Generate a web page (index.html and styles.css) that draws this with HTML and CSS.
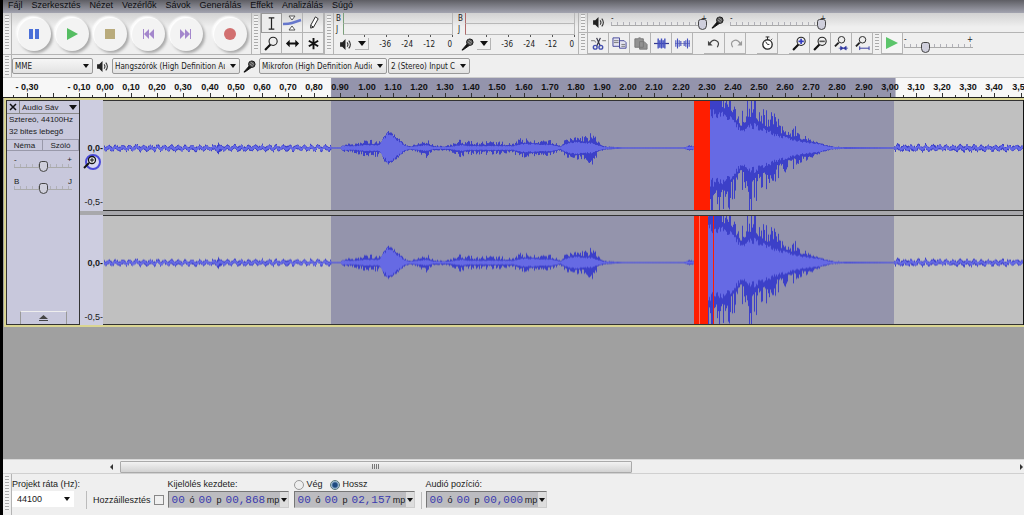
FILE: index.html
```html
<!DOCTYPE html>
<html lang="hu">
<head>
  <meta charset="UTF-8" />
  <meta name="viewport" content="width=device-width, initial-scale=1.0"/>
  <title>Audacity</title>
  <link rel="stylesheet" href="styles.css">
</head>
<body>
  <svg class="defs" aria-hidden="true">
    <symbol id="speaker" viewBox="0 0 12 12">
      <path d="M1 4h2l3-3v10L3 8H1z" fill="#222"/>
      <path d="M7.5 4q1.5 2 0 4M9 2.500q3 3.500 0 7" fill="none" stroke="#333"/>
    </symbol>
    <symbol id="mic" viewBox="0 0 14 14">
      <path d="M1 13L7 6l2 2-7 5z" fill="#111" stroke="#111"/>
      <circle cx="9.500" cy="4.500" r="3.500" fill="#555" stroke="#111"/>
      <path d="M7 4l4 3M8 2l4 3" stroke="#bbb" stroke-width=".7"/>
    </symbol>
    <symbol id="lens" viewBox="0 0 14 14">
      <path d="M1 13l5-5" stroke="#111" stroke-width="2"/>
      <circle cx="8.500" cy="5" r="3.800" fill="#eee" stroke="#222"/>
    </symbol>
  </svg>

  <nav class="menu">
    <a href="#">Fájl</a>
    <a href="#">Szerkesztés</a>
    <a href="#">Nézet</a>
    <a href="#">Vezérlők</a>
    <a href="#">Sávok</a>
    <a href="#">Generálás</a>
    <a href="#">Effekt</a>
    <a href="#">Analizálás</a>
    <a href="#">Súgó</a>
  </nav>

  <div class="toolbars">
    <div class="grip"></div>
    <div class="transport">
      <button aria-label="Szünet"><svg viewBox="0 0 12 12"><path d="M1 1h4v10H1zM7 1h4v10H7z" fill="#4a6fd8"/></svg></button>
      <button aria-label="Lejátszás"><svg viewBox="0 0 12 12"><path d="M1 0l11 6-11 6z" fill="#55bd62"/></svg></button>
      <button aria-label="Leállítás"><svg viewBox="0 0 12 12"><path d="M1 1h10v10H1z" fill="#b9ab7c"/></svg></button>
      <button aria-label="Elejére"><svg viewBox="0 0 12 12"><path d="M1 1h1v10H1zM7 1v10L2 6zM12 1v10L7 6z" fill="#a487cc"/></svg></button>
      <button aria-label="Végére"><svg viewBox="0 0 12 12"><path d="M10 1h1v10h-1zM5 1v10l5-5zM0 1v10l5-5z" fill="#a487cc"/></svg></button>
      <button class="record" aria-label="Felvétel"><svg viewBox="0 0 12 12"><circle cx="6" cy="6" r="6" fill="#d27070"/></svg></button>
    </div>
    <div class="grip"></div>
    <div class="tools">
      <button class="on" aria-label="Kijelölés"><svg viewBox="0 0 16 16"><path d="M5 2h6M8 2v12M5 14h6" stroke="#222" fill="none" stroke-width="1.300"/></svg></button>
      <button class="envelope" aria-label="Burkoló"><svg viewBox="0 0 20 18"><path d="M1 10q6 0 9-1t9-3" stroke="#6677cc" stroke-width="2.500" fill="none"/><path d="M7 2h6l-3 4zM7 16h6l-3-4z" fill="#fff" stroke="#555"/></svg></button>
      <button aria-label="Rajzolás"><svg viewBox="0 0 16 16"><path d="M5 14V11l5-9 3 2-5 9zM5 11l3 2" stroke="#222" fill="#fff"/></svg></button>
      <button aria-label="Nagyítás"><svg viewBox="0 0 14 14"><use href="#lens"/></svg></button>
      <button aria-label="Időeltolás"><svg viewBox="0 0 16 16"><path d="M1 8l4-4v3h6V4l4 4-4 4V9H5v3z" fill="#111"/></svg></button>
      <button aria-label="Többfunkciós"><svg viewBox="0 0 16 16"><path d="M8 2v12M3 5l10 6M13 5L3 11" stroke="#111" stroke-width="2"/></svg></button>
    </div>
    <div class="grip"></div>
    <div class="meter">
      <div class="channels"><span>B</span><i></i><span>J</span><i></i></div>
      <div class="scale">
        <svg class="icon" viewBox="0 0 12 12"><use href="#speaker"/></svg>
        <button aria-label="Kimeneti szint"></button>
        <span>-36</span><span>-24</span><span>-12</span><span>0</span>
      </div>
    </div>
    <div class="meter input">
      <div class="channels"><span>B</span><i></i><span>J</span><i></i></div>
      <div class="scale">
        <svg class="icon" viewBox="0 0 14 14"><use href="#mic"/></svg>
        <button aria-label="Bemeneti szint"></button>
        <span>-36</span><span>-24</span><span>-12</span><span>0</span>
      </div>
    </div>
    <div class="stack">
      <div class="mixer">
        <div class="grip"></div>
        <svg class="icon" viewBox="0 0 12 12"><use href="#speaker"/></svg>
        <div class="slider wide"><span>-</span><span>+</span><input type="range" value="100" aria-label="Kimeneti hangerő"></div>
        <svg class="icon" viewBox="0 0 14 14"><use href="#mic"/></svg>
        <div class="slider wide"><span>-</span><span>+</span><input type="range" value="100" aria-label="Bemeneti hangerő"></div>
      </div>
      <div class="edit">
        <div class="grip"></div>
        <div class="group">
          <button aria-label="Kivágás"><svg viewBox="0 0 16 16"><path d="M0 5h4l1 2M16 5h-4" stroke="#777" fill="none"/><path d="M6 2l4 9M10 2L6 11" stroke="#334" stroke-width="1.300" fill="none"/><circle cx="4.500" cy="12" r="2" fill="none" stroke="#4450b0" stroke-width="1.500"/><circle cx="10.500" cy="12" r="2" fill="none" stroke="#4450b0" stroke-width="1.500"/></svg></button>
          <button aria-label="Másolás"><svg viewBox="0 0 16 16"><path d="M1 2h7v9H1zM8 5h5l2 2v6H8z" fill="#e4e4f0" stroke="#44479a"/><path d="M2 5h5M2 7h5M10 9h4M10 11h4" stroke="#777"/></svg></button>
          <button aria-label="Beillesztés"><svg viewBox="0 0 16 16"><path d="M2 3h3l1-1h2l1 1h2v9H2zM7 6h5l3 3v5H7z" fill="#929292" stroke="#777"/></svg></button>
          <button aria-label="Körülvágás"><svg viewBox="0 0 18 16"><path d="M0 8h18" stroke="#333a90" stroke-width="1.500"/><path d="M5 2v12M7 4v9M9 2v12M11 4v9M13 2v12" stroke="#4450c0" stroke-width="1.700"/></svg></button>
          <button aria-label="Némítás"><svg viewBox="0 0 18 16"><path d="M0 8h18" stroke="#8080b0"/><path d="M1 4v8M3 2v12M5 4v8M7 5v6M11 5v6M13 4v8M15 2v12M17 4v8" stroke="#4450c0" stroke-width="1.300"/></svg></button>
        </div>
        <div class="group">
          <button aria-label="Visszavonás"><svg viewBox="0 0 16 16"><path d="M3 8q3-5 7-3t1 7" stroke="#444" fill="none" stroke-width="1.300"/><path d="M1 5v5h5z" fill="#444"/></svg></button>
          <button aria-label="Újra"><svg viewBox="0 0 16 16"><path d="M13 8q-3-5-7-3t-1 7" stroke="#999" fill="none" stroke-width="1.300"/><path d="M15 5v5h-5z" fill="#999"/></svg></button>
        </div>
        <div class="group">
          <button aria-label="Időzítő"><svg viewBox="0 0 16 16"><circle cx="8" cy="9" r="5" fill="#fff" stroke="#222" stroke-width="1.400"/><path d="M6 1h4M8 1v3M8 9l-2-3M8 9h2M12 4l1-1" stroke="#222"/></svg></button>
        </div>
        <div class="group">
          <button aria-label="Nagyítás"><svg viewBox="0 0 14 14"><use href="#lens"/><path d="M6 5h5M8.500 2.500v5" stroke="#3038c0" stroke-width="1.500"/></svg></button>
          <button aria-label="Kicsinyítés"><svg viewBox="0 0 14 14"><use href="#lens"/><path d="M6 5h5" stroke="#555" stroke-width="1.500"/></svg></button>
          <button aria-label="Kijelöléshez igazítás"><svg viewBox="0 0 16 16"><path d="M1 11l4-4" stroke="#222" stroke-width="2"/><circle cx="8" cy="4" r="3.500" fill="#eee" stroke="#222"/><path d="M5 13h10M7 11l3 2-3 2zM13 11l-3 2 3 2z" stroke="#3038a0" fill="#3038a0" stroke-width=".7"/></svg></button>
          <button aria-label="Projekthez igazítás"><svg viewBox="0 0 16 16"><path d="M1 11l4-4" stroke="#222" stroke-width="2"/><circle cx="8" cy="4" r="3.500" fill="#eee" stroke="#222"/><path d="M5 13h10M5 11v4M15 11v4" stroke="#3038a0"/></svg></button>
        </div>
        <div class="grip"></div>
        <button class="play" aria-label="Lejátszás sebességgel"><svg viewBox="0 0 12 12"><path d="M0 0l12 6-12 6z" fill="#5cc56b"/></svg></button>
        <div class="slider speed"><span>-</span><span>+</span><input type="range" value="28" aria-label="Sebesség"></div>
      </div>
    </div>
  </div>

  <div class="devices">
    <div class="grip"></div>
    <div class="combo host"><select aria-label="Hangrendszer"><option>MME</option></select></div>
    <svg class="icon" viewBox="0 0 12 12"><use href="#speaker"/></svg>
    <div class="combo"><select aria-label="Kimenet"><option>Hangszórók (High Definition Au</option></select></div>
    <svg class="icon" viewBox="0 0 14 14"><use href="#mic"/></svg>
    <div class="combo"><select aria-label="Bemenet"><option>Mikrofon (High Definition Audio</option></select></div>
    <div class="combo chans"><select aria-label="Csatornák"><option>2 (Stereo) Input C</option></select></div>
  </div>

  <svg class="ruler" id="ruler"></svg>

  <main>
    <section class="track">
      <div class="panel">
        <div class="title">
          <button aria-label="Bezárás"><svg viewBox="0 0 8 8"><path d="M1 1l6 6M7 1L1 7" stroke="#111" stroke-width="1.500"/></svg></button>
          <button class="name">Audio Sáv</button>
        </div>
        <p>Sztereó, 44100Hz</p>
        <p>32 bites lebegő</p>
        <div class="mute">
          <button>Néma</button>
          <button>Szóló</button>
        </div>
        <div class="slider"><span>-</span><span>+</span><input type="range" value="50" aria-label="Erősítés"></div>
        <div class="slider"><span>B</span><span>J</span><input type="range" value="50" aria-label="Panoráma"></div>
        <button class="collapse" aria-label="Összecsukás"><svg viewBox="0 0 9 6"><path d="M0 4l4.500-4L9 4zM0 5h9v1H0z" fill="#444"/></svg></button>
      </div>
      <div class="waves">
        <div class="channel">
          <div class="vruler"><b>0,0-</b><span>-0,5-</span></div>
          <canvas></canvas>
        </div>
        <div class="channel">
          <div class="vruler"><b>0,0-</b><span>-0,5-</span></div>
          <canvas></canvas>
        </div>
        <svg class="cursor" viewBox="0 0 20 18"><circle cx="11" cy="9" r="7" fill="#d8d8f0" stroke="#4a4ad8" stroke-width="2"/><path d="M2 15l5-5" stroke="#111" stroke-width="2"/><circle cx="10" cy="7" r="3.500" fill="#eee" stroke="#111" stroke-width="1.300"/><path d="M8 7h4M10 5v4" stroke="#111"/></svg>
      </div>
    </section>
  </main>

  <div class="scrollbar">
    <button class="left" aria-label="Balra"></button>
    <div class="thumb"><i></i></div>
    <button class="right" aria-label="Jobbra"></button>
  </div>

  <footer>
    <div class="grip"></div>
    <div class="field rate">
      <label for="rate">Projekt ráta (Hz):</label>
      <div class="combo"><select id="rate"><option>44100</option></select></div>
    </div>
    <label class="snap">Hozzáillesztés <input type="checkbox"></label>
    <div class="field">
      <label for="start">Kijelölés kezdete:</label>
      <div class="time">
        <input id="start" value="00"><span>ó</span><input aria-label="perc" value="00"><span>p</span><input class="sec" aria-label="másodperc" value="00,868"><span>mp</span><button aria-label="Formátum"></button>
      </div>
    </div>
    <div class="field">
      <div class="radios">
        <label><input type="radio" name="mode">Vég</label>
        <label><input type="radio" name="mode" checked>Hossz</label>
      </div>
      <div class="time">
        <input aria-label="óra" value="00"><span>ó</span><input aria-label="perc" value="00"><span>p</span><input class="sec" aria-label="másodperc" value="02,157"><span>mp</span><button aria-label="Formátum"></button>
      </div>
    </div>
    <div class="field position">
      <label for="pos">Audió pozíció:</label>
      <div class="time">
        <input id="pos" value="00"><span>ó</span><input aria-label="perc" value="00"><span>p</span><input class="sec" aria-label="másodperc" value="00,000"><span>mp</span><button aria-label="Formátum"></button>
      </div>
    </div>
  </footer>

  <script src="script.js"></script>
</body>
</html>
```

FILE: styles.css
```css
:root {
  --bar: #efefef;
  --line: #b4b4b4;
  --panel: #c8c8dc;
  --digits: #3a3aae;
}

* {
  box-sizing: border-box;
}

body {
  margin: 0;
  height: 100vh;
  display: flex;
  flex-direction: column;
  overflow: hidden;
  border-left: 3px solid #000;
  background: var(--bar);
  font-family: "DejaVu Sans Condensed", "Liberation Sans", sans-serif;
  font-size: 8px;
  color: #1a1a1a;
}

button, input, select {
  margin: 0;
  padding: 0;
  border: 0;
  background: none;
  font: inherit;
  color: inherit;
}

svg {
  display: block;
  flex: none;
}

.defs {
  position: absolute;
  width: 0;
  height: 0;
}

.icon {
  width: 13px;
  height: 13px;
}

.grip {
  flex: none;
  width: 9px;
  border-right: 1px solid var(--line);
  background: repeating-linear-gradient(#aaa 0 1px, #f2f2f2 1px 3px) center / 4px 88% no-repeat;
}

/* menu */
.menu {
  flex: none;
  display: flex;
  gap: 9px;
  height: 13px;
  padding-left: 5px;
  font-family: "Liberation Sans", sans-serif;
  font-size: 9px;
  line-height: 10px;
  background: linear-gradient(#5e5e64, #a3a4b0);
}

.menu a {
  color: #0c0c10;
  text-decoration: none;
}

/* toolbars */
.toolbars {
  flex: none;
  display: flex;
  height: 42px;
  border-bottom: 1px solid var(--line);
  background: linear-gradient(#d2d2d2, #efefef 14px);
}

.transport {
  display: flex;
  align-items: center;
  gap: 4px;
  width: 240px;
  padding-left: 5px;
  border-right: 1px solid var(--line);
}

.transport button {
  display: grid;
  place-items: center;
  width: 34px;
  height: 34px;
  border-radius: 50%;
  background: #f3f3f3;
  box-shadow: 2px 2px 3px #a8a8a8, -1px -1px 2px #fff, inset 1px 1px 1px #fff;
}

.transport .record {
  margin-left: 6px;
}

.transport svg {
  width: 12px;
  height: 12px;
}

.tools {
  display: grid;
  grid-template-columns: repeat(3, 21px);
  grid-template-rows: 20px 21px;
  border-right: 1px solid var(--line);
}

.tools button,
.edit button {
  display: grid;
  place-items: center;
  border-right: 1px solid var(--line);
  border-bottom: 1px solid var(--line);
}

.tools .on {
  border: 1px solid #999;
  background: #ececec;
}

.tools svg,
.edit svg {
  width: 15px;
  height: 15px;
}

.tools .envelope svg {
  width: 20px;
  height: 18px;
}

.meter {
  width: 122px;
  padding-left: 2px;
}

.channels {
  display: grid;
  grid-template-columns: 7px 1fr;
  grid-template-rows: 11px 11px;
  line-height: 11px;
  margin-right: 3px;
}

.channels i {
  border: solid #b8b8b8;
  border-width: 0 1px 1px;
  border-left-color: #7ba07b;
}

.input .channels i {
  border-left-color: #b06a6a;
}

.scale {
  display: flex;
  align-items: center;
  height: 18px;
  padding-left: 3px;
  background: repeating-linear-gradient(90deg, #555 0 1px, transparent 1px 22px) 28px 0 / 91px 2px no-repeat;
}

.scale span {
  width: 22px;
  text-align: right;
}

.scale span:last-child {
  width: 17px;
}

.scale button {
  width: 14px;
  height: 12px;
  margin-left: 3px;
  border: solid var(--line);
  border-width: 0 1px 1px 0;
}

.scale button::before,
.name::after,
.combo::after,
.time button::before {
  content: "";
  display: block;
  margin: auto;
  width: 0;
  border: solid transparent;
  border-width: 5px 4px 0;
  border-top-color: #111;
}

.stack {
  flex: 1;
  border-left: 1px solid var(--line);
}

.mixer,
.edit {
  display: flex;
  height: 21px;
}

.mixer {
  align-items: center;
  height: 20px;
  border-bottom: 1px solid var(--line);
}

.mixer .grip {
  align-self: stretch;
}

.mixer .icon {
  margin: 0 5px 0 4px;
}

.mixer .slider + .icon {
  margin: 0 5px 0 3px;
}

.group {
  display: flex;
  margin-right: 11px;
}

.group:nth-of-type(5) {
  margin-right: 0;
}

.group button,
.edit .play {
  width: 21px;
}

.edit .play {
  background: #f5f5f5;
}

.edit .play svg {
  width: 12px;
  height: 12px;
}

.slider {
  display: grid;
  grid-template-columns: 1fr auto;
  line-height: 7px;
  padding: 0 1px;
  width: 60px;
}

.slider input {
  grid-column: 1 / 3;
  width: 100%;
  height: 12px;
  margin-top: -3px;
  appearance: none;
  background:
    repeating-linear-gradient(90deg, #b0b0b8 0 1px, transparent 1px 6px) 0 3px / 100% 3px no-repeat,
    linear-gradient(#aaa, #aaa) 0 6px / 100% 1px no-repeat;
}

.slider input::-webkit-slider-thumb {
  appearance: none;
  width: 9px;
  height: 11px;
  border: 1px solid #444;
  border-radius: 3px 3px 5px 5px;
  background: #cfcfdc;
}

.slider.wide {
  width: 98px;
}

.slider.speed {
  width: 71px;
  margin-top: 3px;
}

/* device bar */
.devices {
  flex: none;
  display: flex;
  align-items: center;
  height: 22px;
}

.devices > .grip {
  align-self: stretch;
}

.devices .icon {
  margin: 0 3px;
}

.combo {
  position: relative;
  width: 128px;
  height: 16px;
}

.combo::after {
  position: absolute;
  top: 6px;
  right: 4px;
  border-width: 4px 3px 0;
  pointer-events: none;
}

.combo select {
  width: 100%;
  height: 100%;
  padding: 0 14px 0 2px;
  appearance: none;
  border: 1px solid #999;
  border-radius: 2px;
  background: linear-gradient(#f6f6f6, #e2e2e2);
}

.host {
  width: 81px;
}

.chans {
  width: 82px;
  margin-left: 1px;
}

/* timeline */
.ruler {
  width: 100%;
  height: 21px;
  background: #f7f7f7;
  border-top: 1px solid #ccc;
  border-bottom: 1px solid #222;
  font: bold 9px "Liberation Sans", sans-serif;
}

/* tracks */
main {
  flex: 1;
  min-height: 0;
  padding-left: 1px;
  background: #a0a0a0;
}

.track {
  display: flex;
  height: 229px;
  border: solid #dad592;
  border-width: 2px 0 2px 2px;
}

.panel {
  display: flex;
  flex-direction: column;
  flex: none;
  width: 74px;
  border: 1px solid #333;
  background: var(--panel);
  font-family: "Liberation Sans", sans-serif;
}

.title {
  display: flex;
  height: 13px;
  border-bottom: 1px solid #888;
}

.title button {
  padding: 0 2px;
  border-right: 1px solid #888;
}

.title svg {
  width: 8px;
  height: 8px;
}

.title .name {
  flex: 1;
  display: flex;
  align-items: center;
  border: 0;
}

.name::after {
  margin-right: 0;
}

.panel p {
  margin: 0;
  padding-left: 2px;
  line-height: 12px;
}

.mute {
  display: flex;
  margin-top: 1px;
}

.mute button {
  flex: 1;
  height: 12px;
  border: 1px solid #9999aa;
  border-width: 1px 1px 1px 0;
}

.panel .slider {
  align-self: center;
  margin-top: 5px;
  height: 17px;
}

.collapse {
  display: grid;
  place-items: center;
  width: 47px;
  height: 13px;
  margin: auto auto 0;
  border: 1px solid #999;
  border-bottom: 0;
  border-top-color: #eee;
}

.collapse svg {
  width: 9px;
  height: 6px;
}

.waves {
  position: relative;
  flex: 1;
  min-width: 0;
  display: flex;
  flex-direction: column;
  gap: 4px;
  border-right: 1px solid #111;
  background: #a8a8ac;
}

.channel {
  flex: 1;
  display: flex;
  min-height: 0;
}

.vruler {
  display: flex;
  flex-direction: column;
  flex: none;
  gap: 44px;
  width: 23px;
  padding-top: 43px;
  line-height: 10px;
  text-align: right;
  font-family: "Liberation Sans", sans-serif;
  font-size: 9px;
  background: #cdcde0;
}

.channel canvas {
  flex: 1;
  min-width: 0;
  height: 100%;
  border: solid #333;
  border-width: 1px 0;
}

.cursor {
  position: absolute;
  left: 2px;
  top: 53px;
  width: 20px;
  height: 18px;
}

/* horizontal scrollbar */
.scrollbar {
  flex: none;
  display: flex;
  align-items: center;
  height: 15px;
  padding-left: 107px;
  border-top: 1px solid #d8d8d8;
  border-bottom: 1px solid #d0d0d0;
}

.scrollbar button {
  width: 10px;
  height: 10px;
}

.scrollbar button::before {
  content: "";
  display: block;
  width: 0;
  border: 3px solid transparent;
  border-right-color: #333;
  border-left-width: 0;
}

.scrollbar .right {
  width: 4px;
  margin-left: auto;
}

.scrollbar .right::before {
  border-width: 3px 0 3px 3px;
  border-left-color: #333;
}

.thumb {
  display: grid;
  place-items: center;
  width: 56%;
  height: 12px;
  border: 1px solid #aaa;
  border-radius: 1px;
  background: linear-gradient(#f2f2f2, #d2d2d2);
}

.thumb i {
  width: 7px;
  height: 5px;
  background: repeating-linear-gradient(90deg, #777 0 1px, transparent 1px 2px);
}

/* selection bar */
footer {
  flex: none;
  display: flex;
  height: 41px;
  font-family: "Liberation Sans", sans-serif;
  font-size: 9px;
}

.field {
  margin-right: 5px;
  padding-top: 4px;
}

.field > label,
.radios {
  display: flex;
  height: 13px;
  line-height: 13px;
}

.field.rate {
  margin-right: 0;
}

.rate .combo {
  width: 62px;
}

.rate select {
  padding-left: 5px;
  border: 0;
  border-radius: 0;
  background: #fff;
}

.snap {
  display: flex;
  align-items: center;
  gap: 3px;
  height: 18px;
  margin: 17px 4px 0 6px;
  padding-left: 6px;
  border-left: 1px solid #bbb;
}

.snap input {
  appearance: none;
  width: 10px;
  height: 10px;
  border: 1px solid #888;
  background: #f0f0f0;
}

.radios {
  gap: 7px;
}

.radios label {
  display: flex;
  align-items: center;
  gap: 3px;
}

.radios input {
  appearance: none;
  width: 10px;
  height: 10px;
  border: 1px solid #999;
  border-radius: 50%;
  background: #eee;
}

.radios input:checked {
  border-color: #577;
  background: radial-gradient(#1c4a80 0 2px, #bcd4e6 4px);
}

.time {
  display: flex;
  align-items: center;
  width: 121px;
  height: 17px;
  padding-left: 3px;
  border: 1px solid;
  border-color: #777 #ccc #ccc #777;
  background: #bcbcc0;
}

.time input {
  width: 14px;
  font: 11px "Liberation Mono", monospace;
  color: var(--digits);
}

.time .sec {
  width: 41px;
}

.time span {
  width: 13px;
  text-align: center;
}

.time button {
  width: 8px;
  height: 100%;
  margin-left: auto;
  background: #ddd;
}

.time button::before {
  border-width: 4px 3px 0;
}

.position {
  margin-left: 1px;
  padding-left: 5px;
  background: linear-gradient(#bbb, #bbb) 0 18px / 1px 17px no-repeat;
}
```

FILE: script.js
```js
const PX_PER_SEC = 261.6;
const SEL_START = 0.868;
const SEL_END = 3.022;

// time ruler
function drawRuler() {
  const ruler = document.getElementById('ruler');
  const zero = 102;
  const width = ruler.clientWidth;
  const x0 = zero + SEL_START * PX_PER_SEC;
  const x1 = zero + SEL_END * PX_PER_SEC;
  let out = `<rect x="${x0 - 1}" width="${x1 - x0 + 1}" height="20" fill="#9494ac"/>`;

  for (let i = -7; zero + i * PX_PER_SEC / 20 < width; i++) {
    const x = Math.round(zero + i * PX_PER_SEC / 20);
    const len = i % 2 ? 2 : 4;
    out += `<rect x="${x}" y="${19 - len}" width="1" height="${len}" fill="#333"/>`;
    if (i % 2 || i === -4) continue;
    const t = i / 20;
    let text = Math.abs(t).toFixed(2);
    if (t < SEL_START || t > 2.95) text = text.replace('.', ',');
    if (t < 0) text = '- ' + text;
    out += `<text x="${x}" y="12" text-anchor="middle" fill="#111">${text}</text>`;
  }
  ruler.innerHTML = out;
}

// [x, peak, rms] in pixels from the start of the clip
const envelope = [
  [0, 4, 1.5], [112, 4, 1.5], [115, 10, 2], [119, 4, 1.5], [227, 4, 1.5], [229, 0.5, 0.5],
  [237, 0.5, 0.5], [239, 4, 2], [250, 5, 2], [262, 9, 3], [274, 9, 3], [277, 6, 4],
  [281, 14, 11], [284, 18, 14], [289, 15, 12], [295, 11, 8], [300, 5, 3], [306, 2, 1],
  [314, 5, 2], [323, 10, 3], [330, 3, 1], [345, 3, 1], [358, 10, 3], [366, 7, 2],
  [385, 7, 2], [410, 6, 2], [417, 11, 4], [432, 8, 4], [449, 8, 3], [457, 3, 1],
  [462, 9, 4], [470, 12, 6], [483, 13, 5], [489, 18, 5], [494, 8, 3], [500, 2, 1],
  [513, 1, 0.5], [519, 0.5, 0.5], [580, 0.5, 0.5], [586, 3, 1.5], [591, 2, 1],
  [606, 85, 38], [622, 72, 33], [629, 55, 28], [638, 38, 18], [645, 70, 22], [651, 76, 23],
  [656, 44, 21], [663, 42, 18], [672, 35, 14], [680, 25, 11], [692, 22, 8], [702, 14, 6],
  [712, 8, 5], [719, 5, 3], [728, 2, 1], [740, 1, 0.5], [790, 0.5, 0.5], [792, 5, 1.5],
  [797, 5, 1.5], [1000, 4, 1.5], [4000, 4, 1.5]
];

function level(x) {
  let i = 1;
  while (i < envelope.length - 1 && envelope[i][0] < x) i++;
  const a = envelope[i - 1], b = envelope[i];
  const k = Math.min(1, (x - a[0]) / (b[0] - a[0]));
  return [a[1] + (b[1] - a[1]) * k, a[2] + (b[2] - a[2]) * k];
}

function drawWave(canvas, second) {
  const w = canvas.width = canvas.clientWidth;
  const h = canvas.height = canvas.clientHeight;
  const ctx = canvas.getContext('2d');
  const mid = 47;
  const selX = 228, selEnd = 791;
  let seed = 7;
  const rand = () => (seed = (seed * 16807) % 2147483647) / 2147483647;

  ctx.fillStyle = '#c0c0c0';
  ctx.fillRect(0, 0, w, h);
  ctx.fillStyle = '#9494ac';
  ctx.fillRect(selX, 0, selEnd - selX, h);

  for (let x = 1; x < w; x++) {
    const [peak, rms] = level(x);
    const quiet = x < selX || x > selEnd;
    const shift = quiet ? Math.sin(x * 0.9) * 1.2 + rand() - 0.5 : 0;
    const reach = () => quiet ? rand() * 0.6 : 0.15 + 0.85 * Math.pow(rand(), 1.4);
    const up = peak < 1 ? peak : rms + (peak - rms) * reach();
    const down = peak < 1 ? peak : rms + (peak - rms) * reach();
    const body = rms * (0.8 + rand() * 0.3);
    ctx.fillStyle = '#3c40c8';
    ctx.fillRect(x, mid + shift - up, 1, up + down);
    ctx.fillStyle = '#666ae4';
    ctx.fillRect(x, mid + shift - body, 1, body * 2);
  }

  // clipped samples
  ctx.fillStyle = '#ff1e00';
  ctx.fillRect(591, 0, second ? 14 : 16, h);
  if (second) {
    ctx.fillRect(610, 0, 1, h);
    ctx.fillStyle = '#ff7060';
    ctx.fillRect(596, 0, 1, h);
  }
}

function draw() {
  drawRuler();
  document.querySelectorAll('.channel canvas').forEach((c, i) => drawWave(c, i === 1));
}

window.addEventListener('resize', draw);
draw();
```
